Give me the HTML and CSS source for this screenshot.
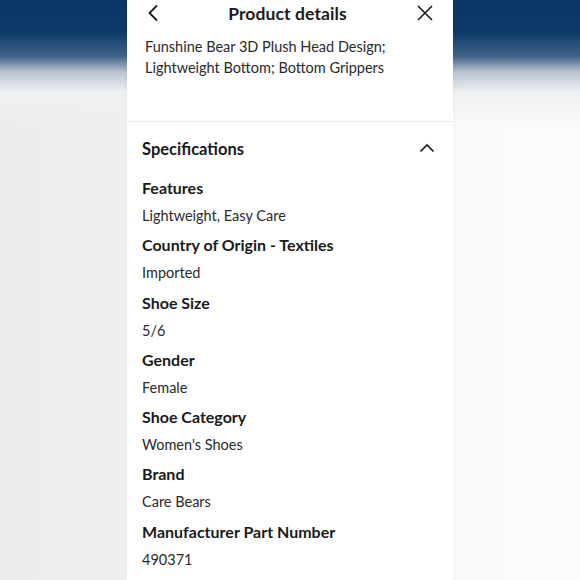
FILE: index.html
```html
<!DOCTYPE html>
<html>
<head>
<meta charset="utf-8">
<link rel="stylesheet" href="styles.css">
</head>
<body>
<div class="stage">
  <div class="panel">
    <div class="header">
      <svg class="icon back" width="12" height="18" viewBox="0 0 12 18"><path d="M10 1.5 L2.5 9 L10 16.5" fill="none" stroke="#1a1a1a" stroke-width="1.8"/></svg>
      <div class="title">Product details</div>
      <svg class="icon close" width="18" height="18" viewBox="0 0 18 18"><path d="M2 2 L16 16 M16 2 L2 16" fill="none" stroke="#1a1a1a" stroke-width="1.6"/></svg>
    </div>
    <div class="desc">Funshine Bear 3D Plush Head Design; Lightweight Bottom; Bottom Grippers</div>
    <div class="divider"></div>
    <div class="specs">
      <div class="specs-head">
        <div class="specs-title">Specifications</div>
        <svg class="icon up" width="16" height="10" viewBox="0 0 16 10"><path d="M1.5 8.5 L8 2 L14.5 8.5" fill="none" stroke="#1a1a1a" stroke-width="1.7"/></svg>
      </div>
      <div class="item"><div class="label">Features</div><div class="value">Lightweight, Easy Care</div></div>
      <div class="item"><div class="label">Country of Origin - Textiles</div><div class="value">Imported</div></div>
      <div class="item"><div class="label">Shoe Size</div><div class="value">5/6</div></div>
      <div class="item"><div class="label">Gender</div><div class="value">Female</div></div>
      <div class="item"><div class="label">Shoe Category</div><div class="value">Women's Shoes</div></div>
      <div class="item"><div class="label">Brand</div><div class="value">Care Bears</div></div>
      <div class="item"><div class="label">Manufacturer Part Number</div><div class="value">490371</div></div>
    </div>
  </div>
</div>
</body>
</html>
```
FILE: styles.css
```css
html, body {
  margin: 0;
  padding: 0;
}
body {
  width: 580px;
  height: 580px;
  overflow: hidden;
  font-family: Lato, "Open Sans", sans-serif;
  color: #1a1a1a;
}
.stage {
  width: 580px;
  height: 580px;
  display: flex;
  justify-content: center;
  background:
    linear-gradient(180deg, #0c3664 0px, #0e3a68 32px, #3f6286 56px, #b8c4d1 72px, #eef0f2 92px, rgba(240,240,240,0) 130px),
    linear-gradient(90deg, #ececec 0px, #efefef 127px, #fafafa 453px, #fbfbfb 580px);
}
.panel {
  width: 326px;
  height: 580px;
  background: #fff;
  box-shadow: 0 0 6px rgba(0,0,0,0.04);
}
.header {
  height: 26px;
  display: flex;
  align-items: center;
  justify-content: space-between;
  padding: 0 19px 0 20px;
}
.icon { display: block; }
.title {
  font-size: 17.5px;
  font-weight: 700;
  letter-spacing: 0.1px;
}
.desc {
  padding: 10px 40px 0 18px;
  font-size: 14.5px;
  line-height: 21px;
  color: #2a2a2a;
  height: 86px;
  box-sizing: border-box;
}
.divider {
  height: 1px;
  background: #ececec;
  margin-top: 9px;
}
.specs {
  padding: 0 18px 0 15px;
}
.specs-head {
  display: flex;
  align-items: center;
  justify-content: space-between;
  height: 50px;
  padding-top: 2px;
}
.specs-title {
  font-size: 16.5px;
  font-weight: 700;
}
.up { margin-top: -3px; }
.item {
  display: flex;
  flex-direction: column;
}
.label {
  font-size: 16px;
  font-weight: 700;
  line-height: 27px;
}
.value {
  font-size: 14.5px;
  line-height: 30.3px;
  color: #2a2a2a;
}
```
